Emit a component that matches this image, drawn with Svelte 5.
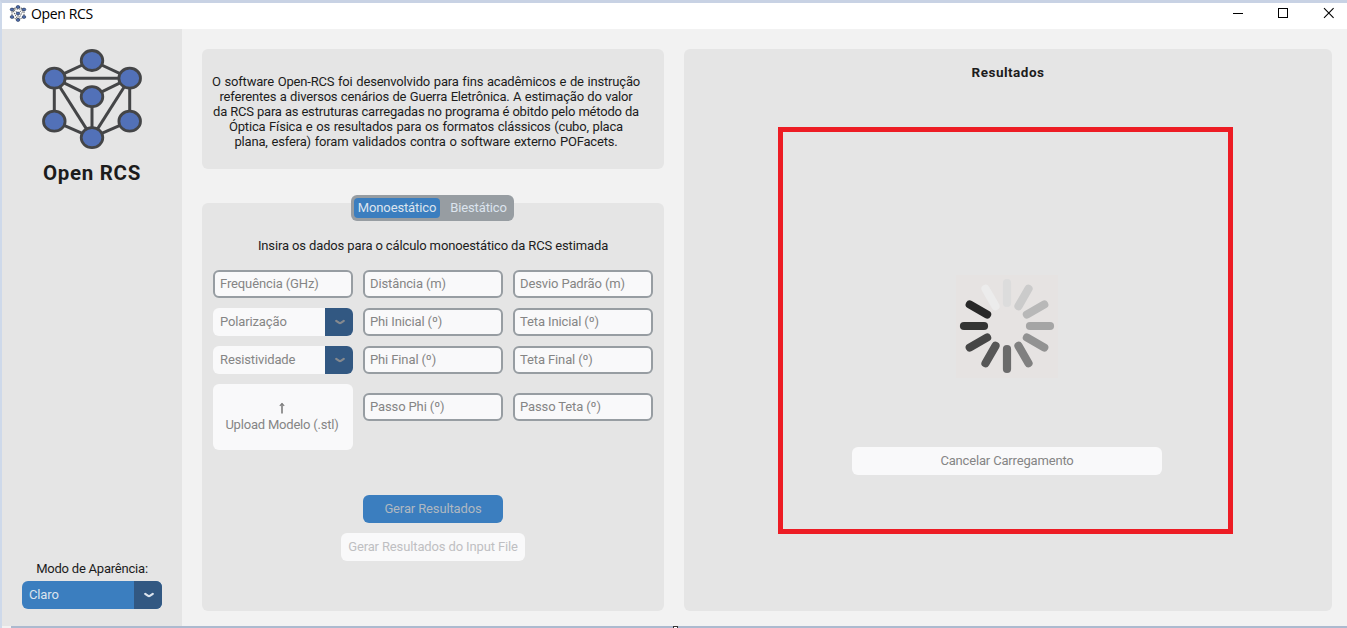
<script>
  const intro = [
    { text: 'O software Open-RCS foi desenvolvido para fins acadêmicos e de instrução', width: 428 },
    { text: 'referentes a diversos cenários de Guerra Eletrônica. A estimação do valor', width: 413 },
    { text: 'da RCS para as estruturas carregadas no programa é obitdo pelo método da', width: 426 },
    { text: 'Óptica Física e os resultados para os formatos clássicos (cubo, placa', width: 394 },
    { text: 'plana, esfera) foram validados contra o software externo POFacets.', width: 383 }
  ];
  const fields = [
    { label: 'Frequência (GHz)', kind: 'entry' },
    { label: 'Distância (m)', kind: 'entry' },
    { label: 'Desvio Padrão (m)', kind: 'entry' },
    { label: 'Polarização', kind: 'select' },
    { label: 'Phi Inicial (º)', kind: 'entry' },
    { label: 'Teta Inicial (º)', kind: 'entry' },
    { label: 'Resistividade', kind: 'select' },
    { label: 'Phi Final (º)', kind: 'entry' },
    { label: 'Teta Final (º)', kind: 'entry' },
    { label: 'Upload Modelo (.stl)', kind: 'upload' },
    { label: 'Passo Phi (º)', kind: 'entry' },
    { label: 'Passo Teta (º)', kind: 'entry' }
  ];
  const nodes = [[51, 12.5], [13.3, 30.2], [88.7, 30.2], [51, 48.7], [13.3, 73.2], [88.7, 73.2], [51, 89.6]];
  const edges = [[0, 1], [0, 2], [1, 2], [1, 3], [2, 3], [1, 4], [2, 5], [1, 6], [2, 6], [3, 6], [4, 6], [5, 6]];
  const spokes = ['#dcdcdc', '#cbcbcb', '#b8b8b8', '#a5a5a5', '#929292', '#808080', '#6b6b6b', '#575757', '#464646', '#333433', '#282828', '#ececec'];
</script>

{#snippet chevron()}
  <svg class="chevron" width="12" height="8" viewBox="0 0 12 8"><path d="M2.2 2.9 L4.8 4.7 Q6 5.5 7.2 4.7 L9.8 2.9" /></svg>
{/snippet}

<div class="window">
  <header>
    <svg class="mini" width="18" height="18" viewBox="0 0 18 18">
      <path d="M3 4 L9 2 L15 4 M3 4 H15 M3 4 L9 8 L15 4 M3 4 V12 L9 15 L15 12 V4 M3 4 L9 15 L15 4 M9 8 V15" />
      {#each [[9, 2], [3, 4.5], [15, 4.5], [9, 8.5], [3, 12], [15, 12], [9, 15]] as [x, y]}
        <ellipse cx={x} cy={y} rx="1.8" ry="1.4" />
      {/each}
    </svg>
    <span class="title">Open RCS</span>
    <svg class="controls" width="104" height="12" viewBox="0 0 104 12">
      <path d="M1 6.5 H11 M46.5 1.5 H55.5 V10.5 H46.5 Z" shape-rendering="crispEdges" />
      <path d="M92 1.2 L101.6 10.8 M101.6 1.2 L92 10.8" />
    </svg>
  </header>

  <main>
    <aside>
      <svg class="logo" width="102" height="102" viewBox="0 0 102 102">
        {#each edges as [a, b]}
          <line x1={nodes[a][0]} y1={nodes[a][1]} x2={nodes[b][0]} y2={nodes[b][1]} />
        {/each}
        {#each nodes as [x, y]}
          <ellipse cx={x} cy={y} rx="10.8" ry="10" />
        {/each}
      </svg>
      <h1>Open RCS</h1>
      <p class="mode">Modo de Aparência:</p>
      <div class="select theme"><span>Claro</span><i>{@render chevron()}</i></div>
    </aside>

    <section class="left">
      <div class="card intro">
        {#each intro as line}
          <p style:width="{line.width}px">{line.text}</p>
        {/each}
      </div>
      <div class="card form">
        <nav><span class="tab active">Monoestático</span><span class="tab">Biestático</span></nav>
        <p class="hint">Insira os dados para o cálculo monoestático da RCS estimada</p>
        <div class="grid">
          {#each fields as f}
            {#if f.kind === 'entry'}
              <div class="entry">{f.label}</div>
            {:else if f.kind === 'select'}
              <div class="select"><span>{f.label}</span><i>{@render chevron()}</i></div>
            {:else}
              <div class="upload">
                <svg width="8" height="12" viewBox="0 0 8 12"><path d="M4 11.5 V1.5" /><path class="head" d="M1.8 3.8 L4 1.6 L6.2 3.8" /></svg>
                <span>{f.label}</span>
              </div>
            {/if}
          {/each}
        </div>
        <div class="button primary">Gerar Resultados</div>
        <div class="button disabled">Gerar Resultados do Input File</div>
      </div>
    </section>

    <section class="card results">
      <h2>Resultados</h2>
      <div class="frame">
        <svg class="spinner" width="102" height="103" viewBox="-51 -51 102 103">
          {#each spokes as color, i}
            <line y1="-23" y2="-43" stroke={color} transform="rotate({i * 30})" />
          {/each}
        </svg>
        <div class="button cancel">Cancelar Carregamento</div>
      </div>
    </section>
  </main>
  <footer><i></i></footer>
</div>

<style>
  :global(body) { margin: 0; overflow: hidden; }
  * { box-sizing: border-box; }
  p, h1, h2 { margin: 0; }
  .window {
    width: 1347px; height: 628px; display: flex; flex-direction: column;
    background: #f2f2f2; border-top: 3px solid #c8d2e4; border-left: 2px solid #ced9ea;
    font: 13px/15px Roboto, sans-serif; color: #1c1c1c; letter-spacing: -.13px;
  }
  header { height: 26px; flex: none; display: flex; align-items: center; background: #fff; padding: 0 11px 0 7px; }
  .mini { margin-top: -5px; }
  .mini path { fill: none; stroke: #34363a; stroke-width: .8; stroke-dasharray: 1.5 .8; }
  .mini ellipse { fill: #4e6eb0; stroke: #2d3d62; stroke-width: .7; }
  .title { font: 14px/20px "Open Sans", sans-serif; color: #000; margin: -5px 0 0 4px; letter-spacing: -.35px; }
  .controls { margin: -7px 0 0 auto; fill: none; stroke: #000; stroke-width: 1.1; }
  main { height: 597px; display: flex; }
  aside { width: 180px; background: #e5e5e5; display: flex; flex-direction: column; align-items: center; padding-bottom: 17px; }
  .logo { margin-top: 19px; flex: none; }
  .logo line { stroke: #444547; stroke-width: 3; }
  .logo ellipse { fill: #5271b8; stroke: #444547; stroke-width: 2.8; }
  h1 { font-size: 20.5px; line-height: 24px; font-weight: 700; margin-top: 11px; letter-spacing: .7px; }
  .mode { margin: auto 0 5px; letter-spacing: -.22px; }
  .left { margin-left: 20px; width: 462px; }
  .card { background: #e5e5e5; border-radius: 6px; }
  .intro { margin-top: 20px; height: 120px; padding: 25px 14px 0 0; display: flex; flex-direction: column; align-items: center; letter-spacing: -.19px; }
  .intro p { white-space: nowrap; text-align-last: justify; }
  .form { margin-top: 34px; height: 408px; display: flex; flex-direction: column; align-items: center; }
  nav { flex: none; display: flex; margin: -8px 1px 0 0; width: 163px; height: 26px; background: #979da2; padding: 3px; border-radius: 6px; color: #dce4ee; }
  .tab { width: 71px; line-height: 20px; text-align: center; border-radius: 4px; white-space: nowrap; padding-left: 6px; }
  .tab.active { width: 86px; background: #3b7ebf; padding: 0; }
  .hint { margin-top: 17px; }
  .grid { margin-top: 17px; display: grid; grid-template-columns: repeat(3, 140px); grid-template-rows: 28px 28px 28px 66px; gap: 10px; align-items: center; justify-content: center; color: #858585; }
  .entry { height: 28px; border: 2px solid #979da2; border-radius: 6px; background: #f9f9fa; padding-left: 5px; line-height: 24px; }
  .grid > .entry { letter-spacing: -.12px; }
  .grid > :nth-child(n + 11) { margin-bottom: 20px; }
  .select { width: 140px; height: 28px; display: flex; border-radius: 6px; overflow: hidden; background: #f9f9fa; line-height: 28px; }
  .select span { flex: 1; padding-left: 7px; }
  .select i { width: 28px; background: #325882; display: flex; align-items: center; justify-content: center; padding-left: 1px; }
  .chevron path { fill: none; stroke: #85898e; stroke-width: 2.2; stroke-linecap: round; stroke-linejoin: round; }
  .theme { background: #3b7ebf; color: #dce4ee; flex: none; }
  .theme .chevron path { stroke: #dce4ee; }
  .upload { height: 66px; background: #f9f9fa; border-radius: 6px; display: flex; flex-direction: column; align-items: center; padding-top: 18px; letter-spacing: -.2px; }
  .upload svg { margin-right: 2px; }
  .upload path { fill: none; stroke: #7c7c7c; stroke-width: 1.6; }
  .upload .head { stroke-width: 1.2; }
  .upload span { margin: 3px 2px 0 0; }
  .button { height: 28px; border-radius: 6px; line-height: 28px; text-align: center; background: #f9f9fa; white-space: nowrap; flex: none; }
  .primary { width: 140px; margin-top: 45px; background: #3b7ebf; color: #afb8c1; }
  .disabled { width: 184px; margin-top: 10px; color: #bfbfc2; }
  .results { margin: 20px 0 0 20px; width: 648px; height: 562px; }
  h2 { font-size: 13.5px; line-height: 15px; font-weight: 700; text-align: center; padding-top: 16px; letter-spacing: .5px; }
  .frame { margin: 47px 0 0 94px; width: 455px; height: 407px; border: 5px solid #ed1c24; display: flex; flex-direction: column; align-items: center; padding-left: 3px; }
  .spinner { margin-top: 143px; background: #e6e3e2; flex: none; }
  .spinner line { stroke-width: 8.2; stroke-linecap: round; }
  .cancel { width: 310px; margin-top: 69px; color: #858585; letter-spacing: -.17px; }
  footer { height: 2px; margin-left: 9px; background: #acbacf; display: flex; justify-content: center; }
  footer i { width: 5px; height: 2px; border: 1px solid #333; border-bottom: 0; background: #fff; margin-right: 8px; }
</style>
